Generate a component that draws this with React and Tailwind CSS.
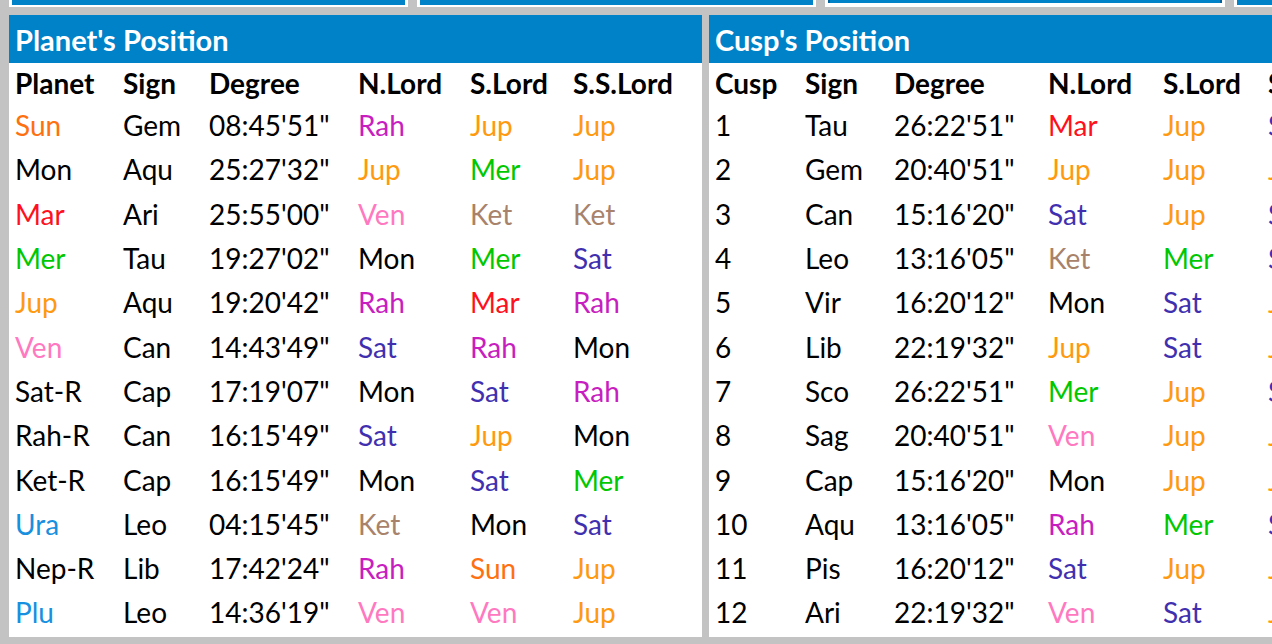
import React from 'react';

const C = {
  Sun: 'text-[#ff7010]',
  Mon: 'text-black',
  Mar: 'text-[#ff1020]',
  Mer: 'text-[#00c800]',
  Jup: 'text-[#ff9a10]',
  Ven: 'text-[#ff78c0]',
  Sat: 'text-[#4030b0]',
  Rah: 'text-[#c81ec0]',
  Ket: 'text-[#a8826a]',
  Ura: 'text-[#1890e0]',
  Plu: 'text-[#1890e0]',
};

function tone(name) {
  return C[name] || 'text-black';
}

const planets = [
  ['Sun', 'Gem', "08:45'51\"", 'Rah', 'Jup', 'Jup'],
  ['Mon', 'Aqu', "25:27'32\"", 'Jup', 'Mer', 'Jup'],
  ['Mar', 'Ari', "25:55'00\"", 'Ven', 'Ket', 'Ket'],
  ['Mer', 'Tau', "19:27'02\"", 'Mon', 'Mer', 'Sat'],
  ['Jup', 'Aqu', "19:20'42\"", 'Rah', 'Mar', 'Rah'],
  ['Ven', 'Can', "14:43'49\"", 'Sat', 'Rah', 'Mon'],
  ['Sat-R', 'Cap', "17:19'07\"", 'Mon', 'Sat', 'Rah'],
  ['Rah-R', 'Can', "16:15'49\"", 'Sat', 'Jup', 'Mon'],
  ['Ket-R', 'Cap', "16:15'49\"", 'Mon', 'Sat', 'Mer'],
  ['Ura', 'Leo', "04:15'45\"", 'Ket', 'Mon', 'Sat'],
  ['Nep-R', 'Lib', "17:42'24\"", 'Rah', 'Sun', 'Jup'],
  ['Plu', 'Leo', "14:36'19\"", 'Ven', 'Ven', 'Jup'],
];

const cusps = [
  ['1', 'Tau', "26:22'51\"", 'Mar', 'Jup', 'Sat'],
  ['2', 'Gem', "20:40'51\"", 'Jup', 'Jup', 'Jup'],
  ['3', 'Can', "15:16'20\"", 'Sat', 'Jup', 'Sat'],
  ['4', 'Leo', "13:16'05\"", 'Ket', 'Mer', 'Sat'],
  ['5', 'Vir', "16:20'12\"", 'Mon', 'Sat', 'Jup'],
  ['6', 'Lib', "22:19'32\"", 'Jup', 'Sat', 'Jup'],
  ['7', 'Sco', "26:22'51\"", 'Mer', 'Jup', 'Sat'],
  ['8', 'Sag', "20:40'51\"", 'Ven', 'Jup', 'Jup'],
  ['9', 'Cap', "15:16'20\"", 'Mon', 'Jup', 'Jup'],
  ['10', 'Aqu', "13:16'05\"", 'Rah', 'Mer', 'Sat'],
  ['11', 'Pis', "16:20'12\"", 'Sat', 'Jup', 'Jup'],
  ['12', 'Ari', "22:19'32\"", 'Ven', 'Sat', 'Jup'],
];

function Panel({ title, heads, rows, cols, firstColored }) {
  return (
    <div className="w-[693px] shrink-0 flex flex-col bg-white overflow-hidden">
      <div className="h-[48px] bg-[#0082c8] flex items-center px-[6px]">
        <span className="text-white font-bold text-[29px] leading-none pt-[1px]">{title}</span>
      </div>
      <div className="px-[6px]">
        <div className={`grid ${cols} h-[40px] items-center font-bold text-black`}>
          {heads.map((h) => (
            <div key={h} className="whitespace-nowrap">{h}</div>
          ))}
        </div>
        {rows.map((r, i) => (
          <div key={i} className={`grid ${cols} h-[44.3px] items-center`}>
            <div className={firstColored ? tone(r[0]) : 'text-black'}>{r[0]}</div>
            <div className="text-black">{r[1]}</div>
            <div className="text-black">{r[2]}</div>
            <div className={tone(r[3])}>{r[3]}</div>
            <div className={tone(r[4])}>{r[4]}</div>
            <div className={tone(r[5])}>{r[5]}</div>
          </div>
        ))}
      </div>
    </div>
  );
}

export default function App() {
  return (
    <div
      className="w-[1272px] h-[644px] overflow-hidden bg-[#c3c3c3] text-[28px] leading-none"
      style={{ fontFamily: 'Lato, "Open Sans", sans-serif' }}
    >
      <div className="flex gap-[9px] pl-[9px] h-[15px] items-start">
        <div className="w-[399px] h-[7px] shrink-0 bg-[#0082c8] border-x-[3px] border-b-[2px] border-white" />
        <div className="w-[399px] h-[7px] shrink-0 bg-[#0082c8] border-x-[3px] border-b-[2px] border-white" />
        <div className="w-[400px] h-[7px] shrink-0 bg-[#0082c8] border-x-[3px] border-b-[2px] border-white shadow-[inset_0_-2px_0_#ffffff,inset_2px_0_0_#005f99,inset_-2px_0_0_#005f99]" />
        <div className="w-[399px] h-[7px] shrink-0 bg-[#0082c8] border-x-[3px] border-b-[2px] border-white" />
      </div>
      <div className="flex gap-[7px] pl-[9px] h-[622px]">
        <Panel
          title="Planet's Position"
          heads={['Planet', 'Sign', 'Degree', 'N.Lord', 'S.Lord', 'S.S.Lord']}
          rows={planets}
          cols="grid-cols-[108px_86px_149px_112px_103px_1fr]"
          firstColored
        />
        <Panel
          title="Cusp's Position"
          heads={['Cusp', 'Sign', 'Degree', 'N.Lord', 'S.Lord', 'S.S.Lord']}
          rows={cusps}
          cols="grid-cols-[90px_89px_154px_115px_105px_1fr]"
        />
      </div>
    </div>
  );
}
